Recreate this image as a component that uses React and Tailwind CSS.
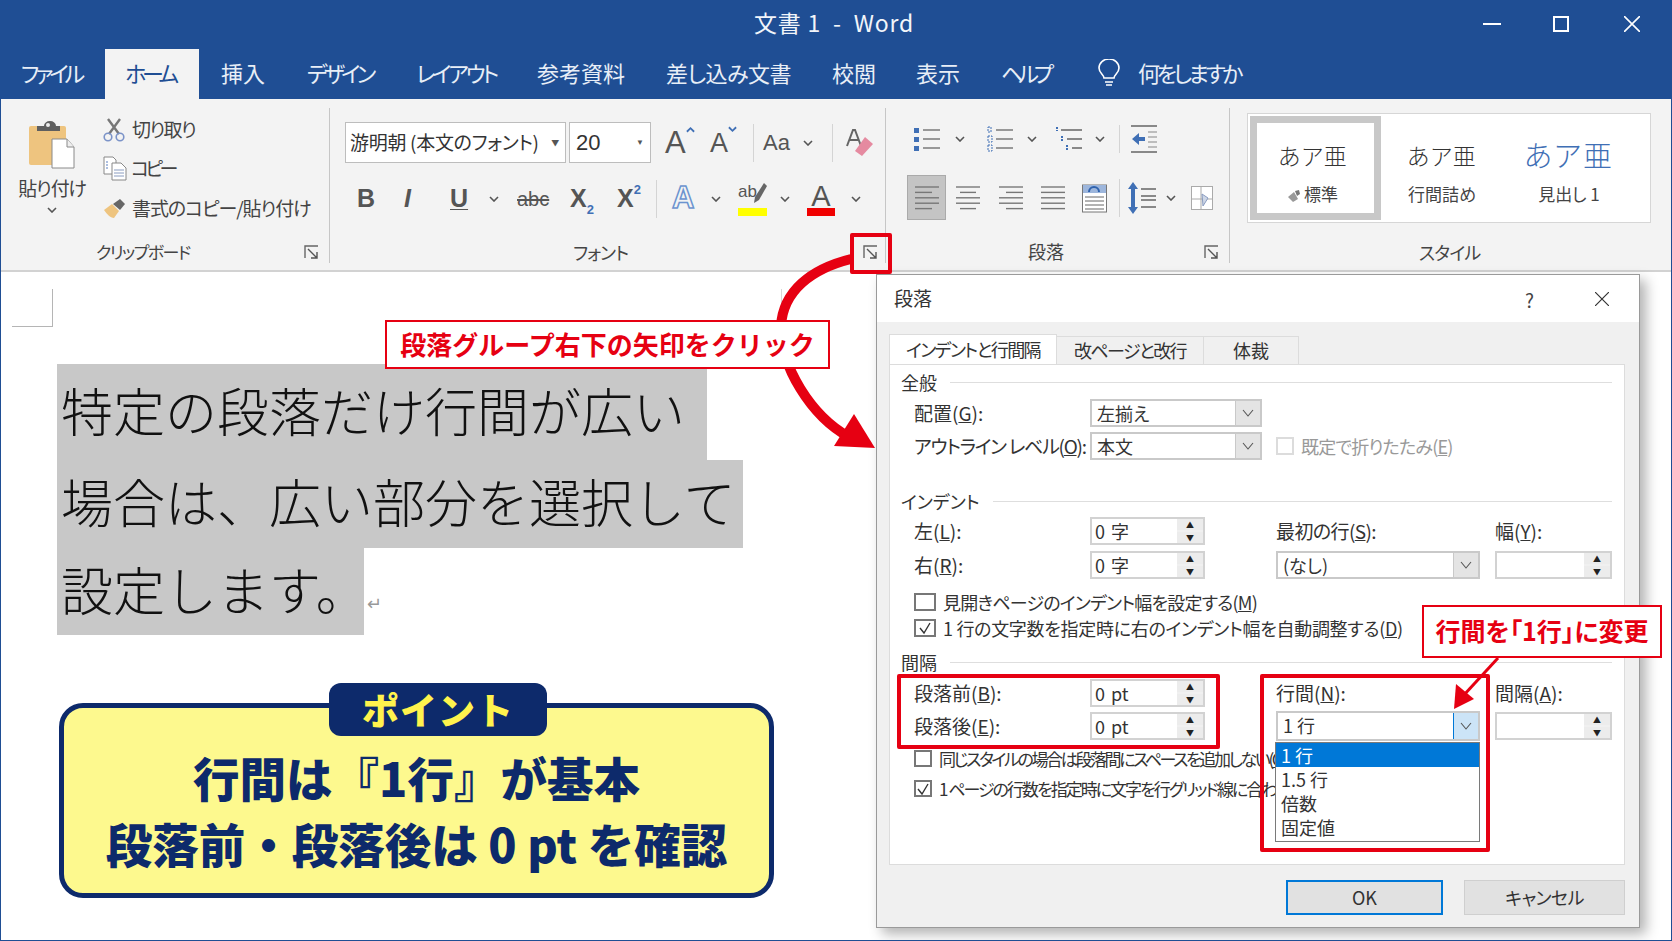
import React from 'react';

const TABS = [
  ['挿入', 'ml-[22px] w-[43px]'],
  ['デザイン', 'ml-[43px] w-[68px] tracking-[-3.8px]'],
  ['レイアウト', 'ml-[41px] w-[81px] tracking-[-3.2px]'],
  ['参考資料', 'ml-[40px] w-[89px]'],
  ['差し込み文書', 'ml-[40px] w-[125px] tracking-[-0.5px]'],
  ['校閲', 'ml-[41px] w-[43px]'],
  ['表示', 'ml-[41px] w-[44px]'],
  ['ヘルプ', 'ml-[41px] w-[51px] tracking-[-5px]'],
];

const Chev = ({ className = '' }) => (
  <svg viewBox="0 0 10 6" className={`w-[10px] h-[6px] shrink-0 ${className}`}>
    <path d="M1 1l4 4 4-4" fill="none" stroke="#555" strokeWidth="1.6" />
  </svg>
);

const Sep = ({ className = '' }) => <div className={`w-px h-[38px] bg-[#d4d4d4] shrink-0 ${className}`} />;

const Launcher = ({ className = '' }) => (
  <svg viewBox="0 0 15 14" className={`w-[15px] h-[14px] shrink-0 ${className}`}>
    <path d="M1 13V1h13" fill="none" stroke="#666" strokeWidth="1.4" />
    <path d="M4 4l9 9M13 7v6H7" fill="none" stroke="#555" strokeWidth="1.4" />
  </svg>
);

const PasteIcon = () => (
  <svg viewBox="0 0 46 50" className="w-[46px] h-[50px]">
    <rect x="0" y="7" width="37" height="39" rx="2" fill="#eec47f" />
    <path d="M8 12V7h7a6 5 0 0 1 12 0h4v5z" fill="#5f5f5f" />
    <circle cx="19" cy="6" r="2" fill="#eee" />
    <path d="M23 20h15l7 8v21H23z" fill="#fff" stroke="#8a8a8a" />
    <path d="M38 20v8h7" fill="#eee" stroke="#8a8a8a" />
  </svg>
);

const ScissorsIcon = () => (
  <svg viewBox="0 0 22 24" className="w-[22px] h-[24px] shrink-0">
    <path d="M5 1l11 15M17 1L6 16" stroke="#777" strokeWidth="2.4" fill="none" />
    <circle cx="5" cy="19" r="3.8" fill="none" stroke="#7b93c8" strokeWidth="1.6" />
    <circle cx="17" cy="19" r="3.8" fill="none" stroke="#7b93c8" strokeWidth="1.6" />
  </svg>
);

const CopyIcon = () => (
  <svg viewBox="0 0 24 25" className="w-[24px] h-[25px] shrink-0">
    <path d="M1 1h9l3 3v14H1z" fill="#fff" stroke="#888" />
    <path d="M3 6h2M3 9h2M3 12h2" stroke="#5b7fc0" />
    <path d="M9 7h9l5 5v12H9z" fill="#fff" stroke="#888" />
    <path d="M11 14h10M11 17h10M11 20h10" stroke="#8a9cc0" />
  </svg>
);

const BrushIcon = () => (
  <svg viewBox="0 0 24 22" className="w-[24px] h-[22px] shrink-0">
    <path d="M1 13l8-6 7 7-5 7c-4 0-7-4-10-8z" fill="#eec47f" />
    <path d="M10 7l7-5 5 5-5 6z" fill="#666" />
  </svg>
);

const Caret = ({ up }) => (
  <svg viewBox="0 0 10 7" className="w-[9px] h-[7px] mt-[1px] shrink-0">
    <path d={up ? 'M1 6l4-4 4 4' : 'M1 1l4 4 4-4'} fill="none" stroke="#3f6fb5" strokeWidth="2" />
  </svg>
);

const Lines = ({ ys, x1 = 0, x2 = 24, color = '#666' }) =>
  ys.map((y) => <path key={y} d={`M${x1} ${y}H${x2}`} stroke={color} strokeWidth="1.3" />);

const BulletIcon = () => (
  <svg viewBox="0 0 26 26" className="w-[26px] h-[26px]">
    <rect x="0" y="2" width="5" height="5" fill="#3f6fb5" />
    <rect x="0" y="11" width="5" height="5" fill="#3f6fb5" />
    <rect x="0" y="20" width="5" height="5" fill="#3f6fb5" />
    <Lines ys={[4, 13, 22]} x1={9} x2={26} />
  </svg>
);

const NumberIcon = () => (
  <svg viewBox="0 0 26 26" className="w-[26px] h-[26px]">
    <path d="M1 1h3v5H1zM1 10h4v6H1zM1 19h4v6H1z" fill="none" stroke="#3f6fb5" strokeDasharray="2 1" />
    <Lines ys={[4, 13, 22]} x1={9} x2={26} />
  </svg>
);

const MultiIcon = () => (
  <svg viewBox="0 0 27 26" className="w-[27px] h-[26px]">
    <path d="M2 1v4M7 10v5M12 19v6" stroke="#3f6fb5" strokeWidth="2" strokeDasharray="2 1" />
    <path d="M6 4h21M12 13h15M17 22h10" stroke="#666" strokeWidth="1.3" />
  </svg>
);

const OutdentIcon = () => (
  <svg viewBox="0 0 26 28" className="w-[26px] h-[28px]">
    <path d="M0 1h26M0 27h26" stroke="#666" strokeWidth="1.3" />
    <path d="M1 14l7-6v4h6v4H8v4z" fill="#3f6fb5" />
    <path d="M17 7h9M17 12h9M17 17h9M17 22h9" stroke="#888" strokeWidth="1.2" />
  </svg>
);

const AlignIcon = ({ rows }) => (
  <svg viewBox="0 0 24 26" className="w-[24px] h-[26px]">
    {rows.map(([a, b], i) => (
      <path key={i} d={`M${a} ${2 + i * 5.4}H${b}`} stroke="#777" strokeWidth="1.4" />
    ))}
  </svg>
);

const DistributeIcon = () => (
  <svg viewBox="0 0 25 30" className="w-[25px] h-[30px]">
    <rect x="0.5" y="2" width="24" height="27" fill="#fff" stroke="#777" />
    <rect x="1" y="2" width="23" height="8" fill="#9db6dc" />
    <path d="M7 9a5 5 0 0 1 10 0" fill="none" stroke="#2f62ad" strokeWidth="2" />
    <path d="M3 14h19M3 18h19M3 22h19M3 26h19" stroke="#666" />
  </svg>
);

const SpacingIcon = () => (
  <svg viewBox="0 0 28 32" className="w-[28px] h-[32px]">
    <path d="M5 0l5 7H7v18h3l-5 7-5-7h3V7H0z" fill="#3f6fb5" />
    <path d="M13 7h15M13 14h15M13 18h15M13 25h15" stroke="#666" strokeWidth="1.3" />
  </svg>
);

const ShadingIcon = () => (
  <svg viewBox="0 0 22 24" className="w-[22px] h-[24px]">
    <rect x="0.5" y="0.5" width="21" height="23" fill="#fff" stroke="#aaa" />
    <path d="M0 13h22M10 0v24" stroke="#aaa" />
    <path d="M11 8l6 4-5 8z" fill="#cdd6e6" stroke="#8a9cc0" />
  </svg>
);

const EraserIcon = () => (
  <svg viewBox="0 0 28 30" className="w-[28px] h-[30px]">
    <path d="M1 18L7 2h2l6 16M4 12h8" fill="none" stroke="#666" strokeWidth="2" />
    <path d="M19 9l8 7-11 12-7-5z" fill="#e58aa0" />
  </svg>
);

const PenIcon = () => (
  <svg viewBox="0 0 14 24" className="absolute right-0 top-0 w-[14px] h-[24px]">
    <path d="M11 1l3 3-8 14-5 3 1-6z" fill="#666" />
  </svg>
);

const MiniBrush = () => (
  <svg viewBox="0 0 12 12" className="w-[12px] h-[12px] mr-[4px] inline-block">
    <path d="M0 7l6-5 4 7-5 3z" fill="#999" />
    <path d="M7 1l4-1 1 4-3 2z" fill="#777" />
  </svg>
);

const Combo = ({ children, width, active }) => (
  <div className={`flex items-stretch h-[28px] bg-white border-2 border-[#c9c9c9] ${width}`}>
    <div className="flex-1 pl-[5px] leading-[24px] text-[18px] text-[#333]">{children}</div>
    <div className={`w-[25px] flex items-center justify-center border-l ${active ? 'bg-[#cce4f7] border-[#0078d7]' : 'bg-[#e4e4e4] border-[#c9c9c9]'}`}>
      <svg viewBox="0 0 12 8" className="w-[12px] h-[8px]">
        <path d="M1 1l5 6 5-6" fill="none" stroke="#555" strokeWidth="1.1" />
      </svg>
    </div>
  </div>
);

const Spin = ({ children, width = 'w-[115px]' }) => (
  <div className={`flex items-stretch h-[28px] bg-white border-2 border-[#d2d2d2] ${width}`}>
    <div className="flex-1 pl-[3px] leading-[24px] text-[18px] text-[#333] [word-spacing:2px]">{children}</div>
    <div className="w-[26px] flex flex-col gap-[2px] bg-[#f0f0f0]">
      <div className="flex-1 flex items-center justify-center bg-[#ececec] text-[8px] leading-none text-[#222]">▲</div>
      <div className="flex-1 flex items-center justify-center bg-[#ececec] text-[8px] leading-none text-[#222]">▼</div>
    </div>
  </div>
);

const Check = ({ checked, size = 'w-[18px] h-[18px]', disabled }) => (
  <div className={`${size} shrink-0 border-2 bg-white flex items-center justify-center ${disabled ? 'border-[#dcdcdc]' : 'border-[#777]'}`}>
    {checked && (
      <svg viewBox="0 0 14 14" className="w-[14px] h-[14px]">
        <path d="M2 7l4 5 6-10" fill="none" stroke="#333" strokeWidth="1.4" />
      </svg>
    )}
  </div>
);

const Heading = ({ children, className = '' }) => (
  <div className={`flex items-center h-[20px] pl-[11px] pr-[12px] gap-[13px] ${className}`}>
    <span className="text-[18px] text-[#333]">{children}</span>
    <div className="flex-1 h-px bg-[#dedede]" />
  </div>
);

const Label = ({ children, className = '' }) => (
  <div className={`w-[176px] text-[19px] text-[#333] shrink-0 whitespace-nowrap ${className}`}>{children}</div>
);

const StyleCard = ({ sample, label, className = '', sampleClass = 'text-[23px] text-[#333] tracking-[1px]' }) => (
  <div className={`flex flex-col items-center ${className}`}>
    <div className={`h-[44px] flex items-center font-light ${sampleClass}`}>{sample}</div>
    <div className="mt-[5px] text-[17px] text-[#444] leading-[24px]">{label}</div>
  </div>
);

export default function App() {
  return (
    <div className="relative w-[1672px] h-[941px] overflow-hidden bg-white border border-[#1f4e94] font-['Noto_Sans_CJK_JP',sans-serif] [font-feature-settings:'palt']">
      {/* title bar */}
      <div className="bg-[#1f4e94] text-white">
        <div className="relative flex items-center justify-center h-[48px] pb-[6px] pr-[4px] text-[23px] text-[#f2f5fa] tracking-[0.8px]">
          <span>文書 1&nbsp; -&nbsp; Word</span>
          <div className="absolute right-[31px] top-0 h-full flex items-center pb-[2px]">
            <div className="w-[18px] h-[2px] bg-white" />
            <div className="ml-[52px] w-[16px] h-[16px] border-2 border-white" />
            <svg viewBox="0 0 16 16" className="ml-[55px] w-[16px] h-[16px]">
              <path d="M0 0l16 16M16 0L0 16" stroke="#fff" strokeWidth="1.6" />
            </svg>
          </div>
        </div>
        <div className="flex items-center h-[50px] text-[22px] text-[#e8eef7] whitespace-nowrap [&>span]:pb-[4px]">
          <span className="ml-[20px] w-[61px] tracking-[-4px]">ファイル</span>
          <div className="ml-[23px] w-[94px] h-[50px] pb-[4px] pr-[4px] bg-[#f3f3f3] text-[#1f4e94] tracking-[-4.5px] flex items-center justify-center">ホーム</div>
          {TABS.map(([name, cls]) => (
            <span key={name} className={cls}>{name}</span>
          ))}
          <svg viewBox="0 0 22 28" className="ml-[46px] mb-[2px] w-[22px] h-[28px] shrink-0">
            <path d="M6 19c0-3-5-5-5-10a10 9 0 0 1 20 0c0 5-5 7-5 10z" fill="none" stroke="#fff" strokeWidth="1.6" />
            <path d="M7 23h8M8 26h6" stroke="#fff" strokeWidth="1.6" />
          </svg>
          <span className="ml-[18px] tracking-[-3.4px]">何をしますか</span>
        </div>
      </div>

      {/* ribbon */}
      <div className="flex h-[173px] bg-[#f3f3f3] border-b-2 border-[#d2d2d2] text-[#444]">
        {/* clipboard */}
        <div className="w-[328px] flex flex-col shrink-0">
          <div className="flex h-[144px]">
            <div className="ml-[16px] w-[70px] flex flex-col items-center pt-[20px]">
              <PasteIcon />
              <div className="mt-[6px] text-[19px] leading-[26px] whitespace-nowrap tracking-[-1.2px]">貼り付け</div>
              <Chev className="mt-[6px]" />
            </div>
            <div className="ml-[16px] pt-[11px] flex flex-col text-[19px] whitespace-nowrap">
              <div className="flex items-center h-[39px] gap-[7px] tracking-[-1.6px]"><ScissorsIcon />切り取り</div>
              <div className="flex items-center h-[39px] gap-[4px] tracking-[-3.6px]"><CopyIcon />コピー</div>
              <div className="flex items-center h-[40px] gap-[5px] tracking-[-1.1px]"><BrushIcon />書式のコピー/貼り付け</div>
            </div>
          </div>
          <div className="flex items-center h-[18px] pl-[95px] text-[17px] tracking-[-1.6px]">
            クリップボード
            <Launcher className="ml-auto mr-[10px]" />
          </div>
        </div>
        <div className="w-px h-[155px] mt-[9px] bg-[#c6c6c6] shrink-0" />

        {/* font */}
        <div className="w-[555px] flex flex-col shrink-0 pt-[23px] pl-[15px]">
          <div className="flex items-center h-[41px]">
            <div className="w-[221px] h-[41px] flex items-center bg-white border border-[#bdbdbd] pl-[4px] text-[19px] text-[#333] tracking-[-0.3px]">
              游明朝 (本文のフォント)
              <span className="ml-auto mr-[6px] text-[8px] text-[#555]">▼</span>
            </div>
            <div className="ml-[3px] w-[82px] h-[41px] flex items-center bg-white border border-[#bdbdbd] pl-[6px] text-[22px] text-[#333] font-['Liberation_Sans',sans-serif]">
              20
              <span className="ml-auto mr-[6px] text-[8px] text-[#555]">▼</span>
            </div>
            <div className="ml-[14px] w-[28px] flex items-start font-['Liberation_Sans',sans-serif] text-[31px] leading-[36px] text-[#555]">A<Caret up /></div>
            <div className="ml-[17px] w-[28px] flex items-start font-['Liberation_Sans',sans-serif] text-[27px] leading-[36px] text-[#555]">A<Caret /></div>
            <Sep className="ml-[15px]" />
            <div className="ml-[9px] w-[27px] font-['Liberation_Sans',sans-serif] text-[22px] text-[#555]">Aa</div>
            <Chev className="ml-[13px]" />
            <Sep className="ml-[19px]" />
            <div className="ml-[13px]"><EraserIcon /></div>
          </div>
          <div className="flex items-center h-[41px] mt-[15px] font-['Liberation_Sans',sans-serif] text-[#555]">
            <div className="ml-[12px] w-[16px] font-bold text-[25px]">B</div>
            <div className="ml-[31px] w-[16px] font-bold italic text-[25px]">I</div>
            <div className="ml-[30px] w-[16px] font-bold text-[25px] underline decoration-1 underline-offset-2">U</div>
            <Chev className="ml-[23px]" />
            <div className="ml-[18px] w-[29px] text-[20px] line-through">abc</div>
            <div className="ml-[24px] w-[22px] font-bold text-[25px] flex items-end">X<span className="text-[13px] text-[#3f6fb5] -mb-[2px]">2</span></div>
            <div className="ml-[25px] w-[23px] font-bold text-[25px] flex items-start">X<span className="text-[13px] text-[#3f6fb5]">2</span></div>
            <Sep className="ml-[16px]" />
            <div className="ml-[15px] w-[23px] font-bold text-[31px] text-[#f3f3f3] [-webkit-text-stroke:1.5px_#6b93cf]">A</div>
            <Chev className="ml-[16px]" />
            <div className="relative ml-[17px] w-[29px] h-[34px]">
              <span className="absolute left-0 top-[-3px] text-[17px] text-[#555]">ab</span>
              <PenIcon />
              <div className="absolute left-0 right-0 bottom-0 h-[8px] bg-[#ffff00]" />
            </div>
            <Chev className="ml-[13px]" />
            <div className="relative ml-[17px] w-[28px] h-[34px] flex justify-center text-[29px] leading-[28px]">
              A
              <div className="absolute left-0 right-0 bottom-0 h-[8px] bg-[#f00000]" />
            </div>
            <Chev className="ml-[16px]" />
          </div>
          <div className="relative mt-[24px] h-[18px] flex items-center text-[18px] pl-[228px] tracking-[-1px]">
            フォント
            <Launcher className="absolute left-[518px] top-[2px]" />
          </div>
        </div>
        <div className="w-px h-[155px] mt-[9px] bg-[#c6c6c6] shrink-0" />

        {/* paragraph */}
        <div className="w-[343px] flex flex-col shrink-0 pt-[26px] pl-[21px]">
          <div className="flex items-center h-[28px]">
            <div className="ml-[7px]"><BulletIcon /></div>
            <Chev className="ml-[15px]" />
            <div className="ml-[22px]"><NumberIcon /></div>
            <Chev className="ml-[14px]" />
            <div className="ml-[18px]"><MultiIcon /></div>
            <Chev className="ml-[13px]" />
            <Sep className="ml-[14px] !h-[28px]" />
            <div className="ml-[11px]"><OutdentIcon /></div>
          </div>
          <div className="flex items-center h-[45px] mt-[22px]">
            <div className="w-[39px] h-[45px] flex items-center justify-center bg-[#c4c4c4] border border-[#aaa]">
              <AlignIcon rows={[[0, 24], [0, 17], [0, 24], [0, 24], [0, 17]]} />
            </div>
            <div className="ml-[10px]"><AlignIcon rows={[[0, 24], [4, 20], [0, 24], [0, 24], [4, 20]]} /></div>
            <div className="ml-[19px]"><AlignIcon rows={[[0, 24], [7, 24], [0, 24], [0, 24], [7, 24]]} /></div>
            <div className="ml-[18px]"><AlignIcon rows={[[0, 24], [0, 24], [0, 24], [0, 24], [0, 24]]} /></div>
            <div className="ml-[17px]"><DistributeIcon /></div>
            <Sep className="ml-[12px]" />
            <div className="ml-[8px]"><SpacingIcon /></div>
            <Chev className="ml-[10px]" />
            <div className="ml-[15px]"><ShadingIcon /></div>
          </div>
          <div className="relative mt-[22px] h-[18px] flex items-center text-[18px] pl-[121px]">
            段落
            <Launcher className="absolute right-[10px] top-[3px]" />
          </div>
        </div>
        <div className="w-px h-[155px] mt-[9px] bg-[#c6c6c6] shrink-0" />

        {/* styles */}
        <div className="flex-1 flex flex-col pt-[14px] pl-[17px]">
          <div className="w-[404px] h-[110px] flex bg-white border border-[#d6d6d6] p-[2px]">
            <div className="w-[131px] h-[104px] border-[7px] border-[#c8c8c8] flex justify-center pt-[10px] pr-[5px]">
              <StyleCard sample="あア亜" label={<><MiniBrush />標準</>} />
            </div>
            <StyleCard sample="あア亜" label="行間詰め" className="w-[122px] pt-[17px]" />
            <StyleCard sample="あア亜" label="見出し 1" className="w-[132px] pt-[17px]" sampleClass="text-[29px] text-[#3f6fb5] tracking-[2px]" />
          </div>
          <div className="mt-[20px] h-[18px] flex items-center text-[18px] pl-[172px] tracking-[-0.8px]">スタイル</div>
        </div>
      </div>

      {/* document */}
      <div className="pl-[11px] pt-[17px]">
        <div className="w-[41px] h-[38px] border-r border-b border-[#b5b5b5]" />
        <div className="absolute left-[780px] top-[288px] w-px h-[30px] bg-[#d8d8d8]" />
        <div className="ml-[45px] mt-[37px] text-[52px] leading-[80px] text-[#111] font-light whitespace-nowrap [font-feature-settings:normal]">
          <div className="w-[650px] h-[96px] bg-[#c8c8c8] pl-[4px] pb-[4px] flex items-center">特定の段落だけ行間が広い</div>
          <div className="w-[686px] h-[88px] bg-[#c8c8c8] pl-[4px] pb-[6px] flex items-center">場合は、広い部分を選択して</div>
          <div className="flex items-center">
            <div className="w-[307px] h-[87px] bg-[#c8c8c8] pl-[4px] pb-[6px] flex items-center">設定します。</div>
            <span className="ml-[3px] mt-[20px] text-[18px] leading-none text-[#999]">↵</span>
          </div>
        </div>

        {/* point box */}
        <div className="relative ml-[47px] mt-[68px] w-[715px] h-[195px] rounded-[24px] border-[5px] border-[#0d2a6b] bg-[#fdf98e] text-[#0d2a6b] font-black [font-feature-settings:normal]">
          <div className="absolute left-[265px] top-[-25px] w-[218px] h-[53px] rounded-[12px] bg-[#0d2a6b] text-[#fff34d] text-[37px] tracking-[1px] flex items-center justify-center">ポイント</div>
          <div className="pt-[36px] text-center text-[46.5px] leading-[66px] whitespace-nowrap">
            <div>行間は『1行』が基本</div>
            <div>段落前・段落後は 0 pt を確認</div>
          </div>
        </div>
      </div>

      {/* paragraph dialog */}
      <div className="absolute left-[875px] top-[273px] w-[764px] h-[654px] flex flex-col bg-[#f0f0f0] border border-[#9a9a9a] shadow-[6px_6px_12px_rgba(0,0,0,0.3)]">
        <div className="relative flex items-center h-[47px] bg-white pl-[17px] text-[19px] text-[#333] shrink-0">
          段落
          <span className="absolute left-[648px] top-[11px] text-[19px] text-[#444]">?</span>
          <svg viewBox="0 0 14 14" className="absolute left-[718px] top-[17px] w-[14px] h-[14px]">
            <path d="M0 0l14 14M14 0L0 14" stroke="#333" strokeWidth="1.2" />
          </svg>
        </div>
        <div className="flex ml-[12px] mt-[12px] h-[30px] items-end text-[18px] text-[#333] tracking-[-1.6px] whitespace-nowrap">
          <div className="w-[168px] h-[30px] bg-white border border-b-0 border-[#dcdcdc] flex items-center justify-center">インデントと行間隔</div>
          <div className="w-[147px] h-[28px] bg-[#f0f0f0] border-r border-t border-[#dcdcdc] flex items-center justify-center">改ページと改行</div>
          <div className="w-[95px] h-[28px] bg-[#f0f0f0] border-r border-t border-[#dcdcdc] flex items-center justify-center tracking-normal">体裁</div>
        </div>
        <div className="relative ml-[12px] w-[736px] h-[501px] bg-white border border-[#dcdcdc] pt-[7px] text-[#333]">
          <Heading>全般</Heading>
          <div className="flex items-center h-[28px] pl-[24px] mt-[7px]">
            <Label>配置(<u>G</u>):</Label>
            <Combo width="w-[172px]">左揃え</Combo>
          </div>
          <div className="flex items-center h-[28px] pl-[24px] mt-[5px]">
            <Label className="tracking-[-1.3px]">アウトライン レベル(<u>O</u>):</Label>
            <Combo width="w-[172px]">本文</Combo>
            <div className="ml-[14px]"><Check disabled /></div>
            <span className="ml-[7px] text-[18px] text-[#999] tracking-[-0.8px]">既定で折りたたみ(<u>E</u>)</span>
          </div>
          <Heading className="mt-[31px]">インデント</Heading>
          <div className="flex items-center h-[28px] pl-[24px] mt-[6px]">
            <Label>左(<u>L</u>):</Label>
            <Spin>0 字</Spin>
            <span className="ml-[71px] w-[219px] text-[19px] tracking-[-0.6px]">最初の行(<u>S</u>):</span>
            <span className="text-[19px]">幅(<u>Y</u>):</span>
          </div>
          <div className="flex items-center h-[28px] pl-[24px] mt-[6px]">
            <Label>右(<u>R</u>):</Label>
            <Spin>0 字</Spin>
            <div className="ml-[71px]"><Combo width="w-[204px]">(なし)</Combo></div>
            <div className="ml-[15px]"><Spin width="w-[117px]" /></div>
          </div>
          <div className="flex items-center h-[18px] pl-[24px] mt-[14px] text-[18px] whitespace-nowrap">
            <Check size="w-[22px] h-[18px]" />
            <span className="ml-[7px] tracking-[-0.8px]">見開きページのインデント幅を設定する(<u>M</u>)</span>
          </div>
          <div className="flex items-center h-[18px] pl-[24px] mt-[8px] text-[18px] whitespace-nowrap">
            <Check checked size="w-[22px] h-[18px]" />
            <span className="ml-[7px] tracking-[-0.3px]">1 行の文字数を指定時に右のインデント幅を自動調整する(<u>D</u>)</span>
          </div>
          <Heading className="mt-[15px]">間隔</Heading>
          <div className="flex items-center h-[28px] pl-[24px] mt-[7px]">
            <Label>段落前(<u>B</u>):</Label>
            <Spin>0 pt</Spin>
            <span className="ml-[71px] w-[219px] text-[19px]">行間(<u>N</u>):</span>
            <span className="text-[19px]">間隔(<u>A</u>):</span>
          </div>
          <div className="flex items-center h-[30px] pl-[24px] mt-[4px]">
            <Label>段落後(<u>E</u>):</Label>
            <Spin>0 pt</Spin>
            <div className="ml-[71px]"><Combo active width="!h-[30px] w-[204px]">1 行</Combo></div>
            <div className="ml-[15px]"><Spin width="w-[117px]" /></div>
          </div>
          <div className="flex items-center h-[17px] pl-[24px] mt-[9px] text-[17px] whitespace-nowrap">
            <Check size="w-[18px] h-[17px]" />
            <span className="ml-[7px] tracking-[-2.4px]">同じスタイルの場合は段落間にスペースを追加しない(<u>C</u>)</span>
          </div>
          <div className="flex items-center h-[17px] pl-[24px] mt-[13px] text-[17px] whitespace-nowrap">
            <Check checked size="w-[18px] h-[17px]" />
            <span className="ml-[7px] tracking-[-2px]">1 ページの行数を指定時に文字を行グリッド線に合わせる(<u>W</u>)</span>
          </div>
          {/* open line-spacing list */}
          <div className="absolute left-[385px] top-[377px] w-[205px] h-[100px] bg-white border border-[#7a7a7a] text-[18px] leading-[24px] text-[#333]">
            <div className="bg-[#0078d7] text-white pl-[5px]">1 行</div>
            <div className="pl-[5px]">1.5 行</div>
            <div className="pl-[5px]">倍数</div>
            <div className="pl-[5px]">固定値</div>
          </div>
        </div>
        <div className="flex ml-[409px] mt-[15px] text-[18px] text-[#333]">
          <div className="w-[157px] h-[35px] flex items-center justify-center bg-[#e1e1e1] border-2 border-[#0078d7]">OK</div>
          <div className="ml-[21px] w-[161px] h-[35px] flex items-center justify-center bg-[#e1e1e1] border border-[#cfcfcf] tracking-[-0.6px]">キャンセル</div>
        </div>
      </div>

      {/* annotation arrows */}
      <svg viewBox="0 0 1672 941" className="absolute left-0 top-0 w-[1672px] h-[941px] pointer-events-none">
        <path d="M850 258C810 268 782 290 780 325C779 365 810 415 848 436" fill="none" stroke="#e60012" strokeWidth="10" />
        <path d="M874 447L853 413L833 445z" fill="#e60012" />
        <path d="M1497 657L1462 695" fill="none" stroke="#e60012" strokeWidth="3" />
        <path d="M1453 708L1455 683L1473 698z" fill="#e60012" />
      </svg>

      {/* red boxes + callouts */}
      <div className="absolute left-[849px] top-[232px] w-[42px] h-[41px] border-4 border-[#e60012] rounded-[2px]" />
      <div className="absolute left-[896px] top-[673px] w-[323px] h-[75px] border-4 border-[#e60012] rounded-[2px]" />
      <div className="absolute left-[1259px] top-[673px] w-[230px] h-[178px] border-4 border-[#e60012] rounded-[2px]" />
      <div className="absolute left-[384px] top-[319px] w-[445px] h-[49px] pb-[3px] bg-white border-2 border-[#e60012] text-[#e60012] font-bold text-[26px] flex items-center justify-center [font-feature-settings:normal]">段落グループ右下の矢印をクリック</div>
      <div className="absolute left-[1421px] top-[604px] w-[240px] h-[53px] pb-[2px] bg-white border-2 border-[#e60012] text-[#e60012] font-bold text-[25px] flex items-center justify-center">行間を「1行」に変更</div>
    </div>
  );
}
